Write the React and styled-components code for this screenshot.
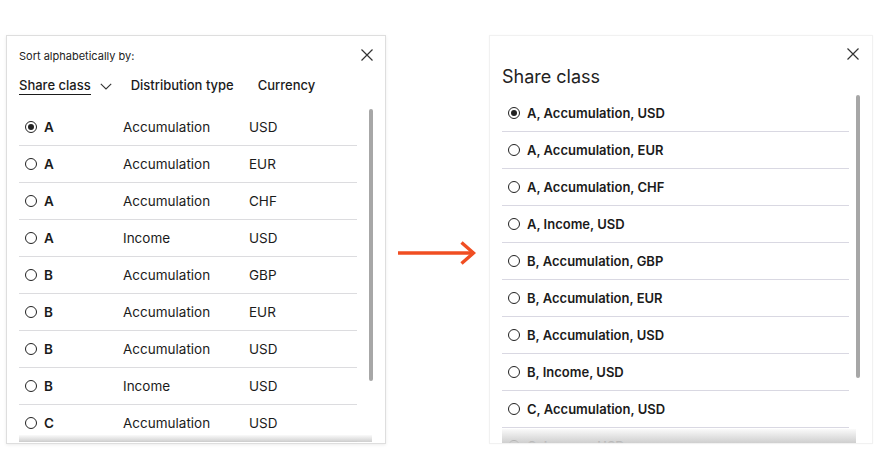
import React from 'react';
import styled, {createGlobalStyle} from 'styled-components';

const GlobalStyle = createGlobalStyle`
  html, body {
    margin: 0;
    padding: 0;
    background: #fff;
  }
  body {
    font-family: Inter, "Liberation Sans", Arial, sans-serif;
    color: #1b1b1b;
    -webkit-font-smoothing: antialiased;
  }
`

const Page = styled.div`
  display: flex;
  align-items: flex-start;
  padding: 35px 0 0 6px;
  width: 878px;
  height: 470px;
  box-sizing: border-box;
`

const Panel = styled.div`
  position: relative;
  box-sizing: border-box;
  width: ${p => p.width}px;
  height: 409px;
  border: 1px solid ${p => p.faint ? '#f1f1f1' : '#dedede'};
  box-shadow: ${p => p.faint ? '0 0 2px rgba(0,0,0,0.03)' : '0 1px 3px rgba(0,0,0,0.08)'};
  background: #fff;
  display: flex;
  flex-direction: column;
  overflow: hidden;
`

const CloseButton = styled.button`
  position: absolute;
  top: ${p => p.top}px;
  right: ${p => p.right}px;
  width: 14px;
  height: 14px;
  padding: 0;
  border: 0;
  background: none;
  display: flex;
  cursor: pointer;
`

const SortLabel = styled.div`
  font-size: 11px;
  line-height: 14px;
  margin: 13px 0 0 12px;
  color: #222;
`

const Tabs = styled.div`
  display: flex;
  align-items: center;
  margin: 11px 0 0 12px;
  height: 24px;
`

const Tab = styled.div`
  display: flex;
  align-items: center;
  font-size: 13px;
  font-weight: 500;
  margin-right: ${p => p.gap}px;
  color: #1b1b1b;
  span {
    border-bottom: ${p => p.active ? '1.5px solid #1b1b1b' : '1.5px solid transparent'};
    padding-bottom: 1px;
  }
  svg {
    margin-left: 9px;
  }
`

const Title = styled.div`
  font-size: 18px;
  line-height: 22px;
  margin: 30px 0 0 12px;
  color: #222;
`

const ListArea = styled.div`
  position: relative;
  display: flex;
  margin: ${p => p.top}px 0 0 12px;
  height: ${p => p.height}px;
  overflow: hidden;
  &::after {
    content: '';
    position: absolute;
    left: 0;
    right: ${p => p.fadeRight}px;
    bottom: 0;
    height: ${p => p.fade}px;
    background: linear-gradient(to bottom, rgba(230,230,230,0.2) 0%, rgba(205,205,205,0.97) 100%);
  }
`

const List = styled.div`
  width: ${p => p.width}px;
  flex: none;
`

const Row = styled.label`
  display: grid;
  grid-template-columns: ${p => p.columns};
  align-items: center;
  height: 36px;
  border-bottom: 1px solid ${p => p.line};
  font-size: ${p => p.size}px;
  cursor: pointer;
`

const Lead = styled.div`
  display: flex;
  align-items: center;
  padding-left: 6px;
  gap: 7px;
  font-weight: ${p => p.weight};
`

const Radio = styled.span`
  flex: none;
  box-sizing: border-box;
  width: 12px;
  height: 12px;
  border-radius: 50%;
  border: 1px solid #222;
  display: flex;
  align-items: center;
  justify-content: center;
  &::after {
    content: '';
    width: 6px;
    height: 6px;
    border-radius: 50%;
    background: ${p => p.checked ? '#222' : 'transparent'};
  }
`

const Track = styled.div`
  margin-left: ${p => p.offset}px;
  width: 4px;
  flex: none;
`

const Thumb = styled.div`
  width: 4px;
  height: ${p => p.height}px;
  border-radius: 2px;
  background: #a7a7a7;
`

const ArrowWrap = styled.div`
  align-self: center;
  margin: 0 13px 0 12px;
  width: 78px;
  height: 24px;
  display: flex;
`

const CloseIcon = () => (
  <svg width="14" height="14" viewBox="0 0 14 14">
    <path d="M1.5 1.5 L12.5 12.5 M12.5 1.5 L1.5 12.5" stroke="#333" strokeWidth="1.2" fill="none"/>
  </svg>
)

const Chevron = () => (
  <svg width="12" height="7" viewBox="0 0 12 7">
    <path d="M0.8 0.8 L6 6 L11.2 0.8" stroke="#333" strokeWidth="1.1" fill="none"/>
  </svg>
)

const Arrow = () => (
  <svg width="78" height="24" viewBox="0 0 78 24">
    <path d="M0 12 H76" stroke="#f04e22" strokeWidth="3.4" fill="none"/>
    <path d="M63.5 1.5 L75.5 12 L63.5 22.5" stroke="#f04e22" strokeWidth="3.4" fill="none"/>
  </svg>
)

const shareClasses = [
  ['A', 'Accumulation', 'USD'],
  ['A', 'Accumulation', 'EUR'],
  ['A', 'Accumulation', 'CHF'],
  ['A', 'Income', 'USD'],
  ['B', 'Accumulation', 'GBP'],
  ['B', 'Accumulation', 'EUR'],
  ['B', 'Accumulation', 'USD'],
  ['B', 'Income', 'USD'],
  ['C', 'Accumulation', 'USD'],
  ['C', 'Income', 'USD'],
]

export default function App() {
  return (
    <Page>
      <GlobalStyle/>
      <Panel width={380}>
        <CloseButton top={12} right={11} aria-label="Close"><CloseIcon/></CloseButton>
        <SortLabel>Sort alphabetically by:</SortLabel>
        <Tabs>
          <Tab active gap={19}><span>Share class</span><Chevron/></Tab>
          <Tab gap={24}><span>Distribution type</span></Tab>
          <Tab><span>Currency</span></Tab>
        </Tabs>
        <ListArea top={11} height={333} fade={7} fadeRight={13}>
          <List width={338}>
            {shareClasses.slice(0, 9).map((item, i) => (
              <Row key={i} columns="104px 126px 1fr" line="#dcdcdf" size={13.5}>
                <Lead weight={600}><Radio checked={i === 0}/>{item[0]}</Lead>
                <span>{item[1]}</span>
                <span>{item[2]}</span>
              </Row>
            ))}
          </List>
          <Track offset={12}><Thumb height={272}/></Track>
        </ListArea>
      </Panel>
      <ArrowWrap><Arrow/></ArrowWrap>
      <Panel width={384} faint>
        <CloseButton top={11} right={12} aria-label="Close"><CloseIcon/></CloseButton>
        <Title>Share class</Title>
        <ListArea top={7} height={348} fade={14} fadeRight={16}>
          <List width={347}>
            {shareClasses.map((item, i) => (
              <Row key={i} columns="1fr" line="#d9d8e2" size={13}>
                <Lead weight={600}><Radio checked={i === 0}/>{item.join(', ')}</Lead>
              </Row>
            ))}
          </List>
          <Track offset={7}><Thumb height={283}/></Track>
        </ListArea>
      </Panel>
    </Page>
  );
}
